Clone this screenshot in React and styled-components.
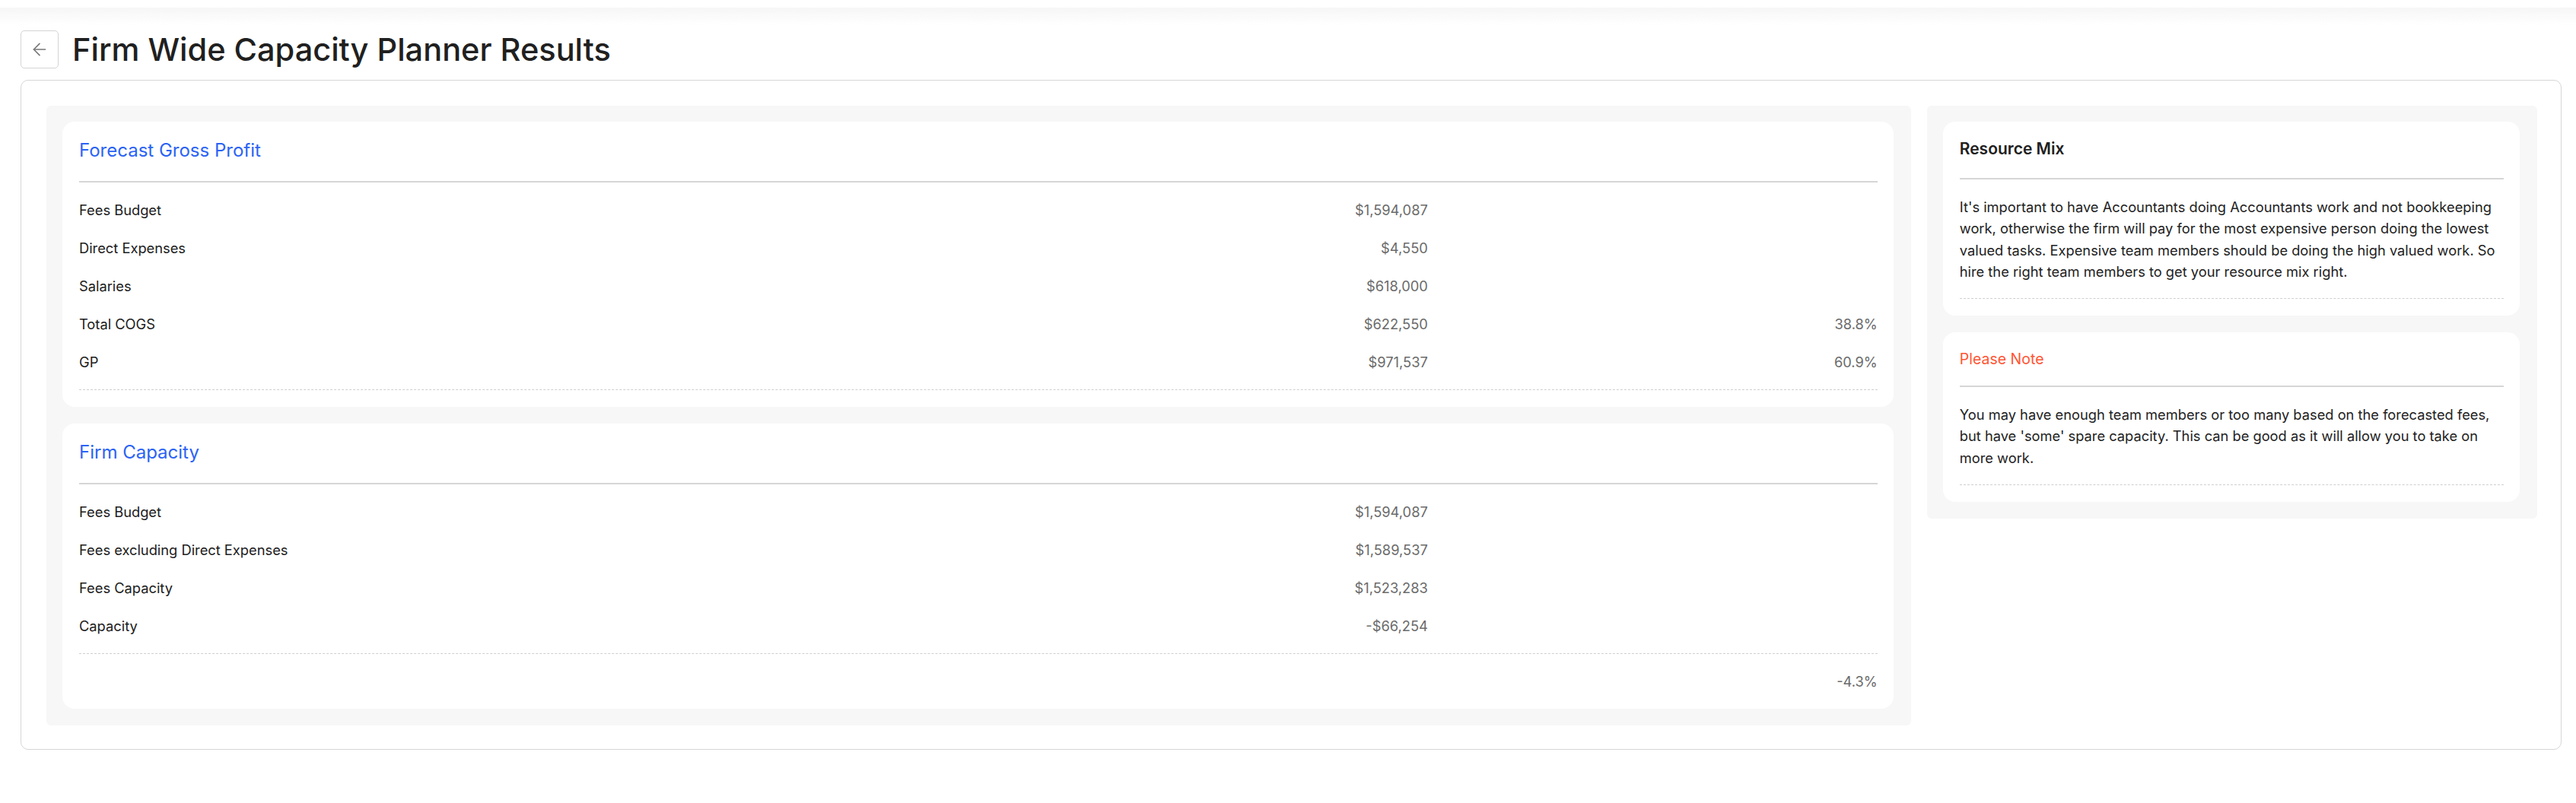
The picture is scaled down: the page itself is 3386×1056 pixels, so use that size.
import styled, { createGlobalStyle } from 'styled-components';
import { ArrowLeft } from 'lucide-react';

const GlobalStyle = createGlobalStyle`
  body {
    margin: 0;
    background: #ffffff;
    font-family: Inter, "Liberation Sans", sans-serif;
    color: #222222;
  }
`;

const Page = styled.div`
  width: 3386px;
  min-height: 1056px;
  background: #ffffff;
`;

const TopShade = styled.div`
  height: 33px;
  background: linear-gradient(to bottom, #ffffff 0, #ffffff 10px, #f6f6f6 10px, #ffffff 33px);
`;

const Header = styled.div`
  display: flex;
  align-items: center;
  gap: 18px;
  padding: 7px 0 0 27px;
`;

const BackButton = styled.button`
  width: 50px;
  height: 50px;
  display: flex;
  align-items: center;
  justify-content: center;
  background: #ffffff;
  border: 1px solid #d4d4d4;
  border-radius: 5px;
  color: #777777;
  padding: 0;
  cursor: pointer;
`;

const Title = styled.h1`
  margin: 0;
  font-size: 41.5px;
  font-weight: 500;
  color: #202020;
  line-height: 50px;
`;

const Outer = styled.div`
  margin: 15px 19px 0 27px;
  border: 1.5px solid #d6d6d6;
  border-radius: 10px;
  padding: 33px 31px 31px 33px;
`;

const Columns = styled.div`
  display: grid;
  grid-template-columns: 2450fr 802fr;
  gap: 21px;
  align-items: start;
`;

const Panel = styled.div`
  background: #f7f7f7;
  border-radius: 6px;
  padding: 21px 23px 22px 21px;
  display: flex;
  flex-direction: column;
  gap: 22px;
`;

const Card = styled.div`
  background: #ffffff;
  border-radius: 16px;
  padding: 22px 21px 0 22px;
`;

const titleSizes = {
  large: { size: '24px', line: '32px', pad: '24px', weight: 400 },
  bold: { size: '21px', line: '28px', pad: '24px', weight: 600 },
  small: { size: '19.5px', line: '26px', pad: '22px', weight: 400 },
};

const CardTitle = styled.div`
  font-size: ${(p) => titleSizes[p.$kind || 'large'].size};
  font-weight: ${(p) => titleSizes[p.$kind || 'large'].weight};
  line-height: ${(p) => titleSizes[p.$kind || 'large'].line};
  padding-bottom: ${(p) => titleSizes[p.$kind || 'large'].pad};
  color: ${(p) => p.$color || '#202020'};
  border-bottom: 2px solid #d6d6d6;
`;

const Rows = styled.div`
  padding: 11px 0;
`;

const Row = styled.div`
  display: grid;
  grid-template-columns: 2fr 1fr 1fr;
  align-items: center;
  height: 50px;
  font-size: 18.3px;
`;

const Label = styled.span`
  color: #202020;
`;

const Num = styled.span`
  text-align: right;
  color: #6b6b6b;
`;

const Footer = styled.div`
  border-top: 1px dashed #cfcfcf;
  padding: 11px 0;
`;

const Text = styled.p`
  margin: 0;
  padding: 22px 0 21px;
  font-size: 18.3px;
  line-height: 28.3px;
  color: #222222;
`;

const forecast = [
  ['Fees Budget', '$1,594,087', ''],
  ['Direct Expenses', '$4,550', ''],
  ['Salaries', '$618,000', ''],
  ['Total COGS', '$622,550', '38.8%'],
  ['GP', '$971,537', '60.9%'],
];

const capacity = [
  ['Fees Budget', '$1,594,087'],
  ['Fees excluding Direct Expenses', '$1,589,537'],
  ['Fees Capacity', '$1,523,283'],
  ['Capacity', '-$66,254'],
];

export default function App() {
  return (
    <Page>
      <GlobalStyle />
      <TopShade />
      <Header>
        <BackButton aria-label="Back">
          <ArrowLeft size={26} strokeWidth={1.5} />
        </BackButton>
        <Title>Firm Wide Capacity Planner Results</Title>
      </Header>

      <Outer>
        <Columns>
          <Panel>
            <Card>
              <CardTitle $color="#2a63f5">Forecast Gross Profit</CardTitle>
              <Rows>
                {forecast.map(([label, value, pct]) => (
                  <Row key={label}>
                    <Label>{label}</Label>
                    <Num>{value}</Num>
                    <Num>{pct}</Num>
                  </Row>
                ))}
              </Rows>
              <Footer />
            </Card>

            <Card>
              <CardTitle $color="#2a63f5">Firm Capacity</CardTitle>
              <Rows>
                {capacity.map(([label, value]) => (
                  <Row key={label}>
                    <Label>{label}</Label>
                    <Num>{value}</Num>
                    <Num />
                  </Row>
                ))}
              </Rows>
              <Footer>
                <Row>
                  <Label />
                  <Num />
                  <Num>-4.3%</Num>
                </Row>
              </Footer>
            </Card>
          </Panel>

          <Panel>
            <Card>
              <CardTitle $kind="bold">Resource Mix</CardTitle>
              <Text>
                It's important to have Accountants doing Accountants work and not bookkeeping
                work, otherwise the firm will pay for the most expensive person doing the lowest
                valued tasks. Expensive team members should be doing the high valued work. So
                hire the right team members to get your resource mix right.
              </Text>
              <Footer />
            </Card>

            <Card>
              <CardTitle $kind="small" $color="#ff5533">Please Note</CardTitle>
              <Text>
                You may have enough team members or too many based on the forecasted fees,
                but have 'some' spare capacity. This can be good as it will allow you to take on
                more work.
              </Text>
              <Footer />
            </Card>
          </Panel>
        </Columns>
      </Outer>
    </Page>
  );
}
